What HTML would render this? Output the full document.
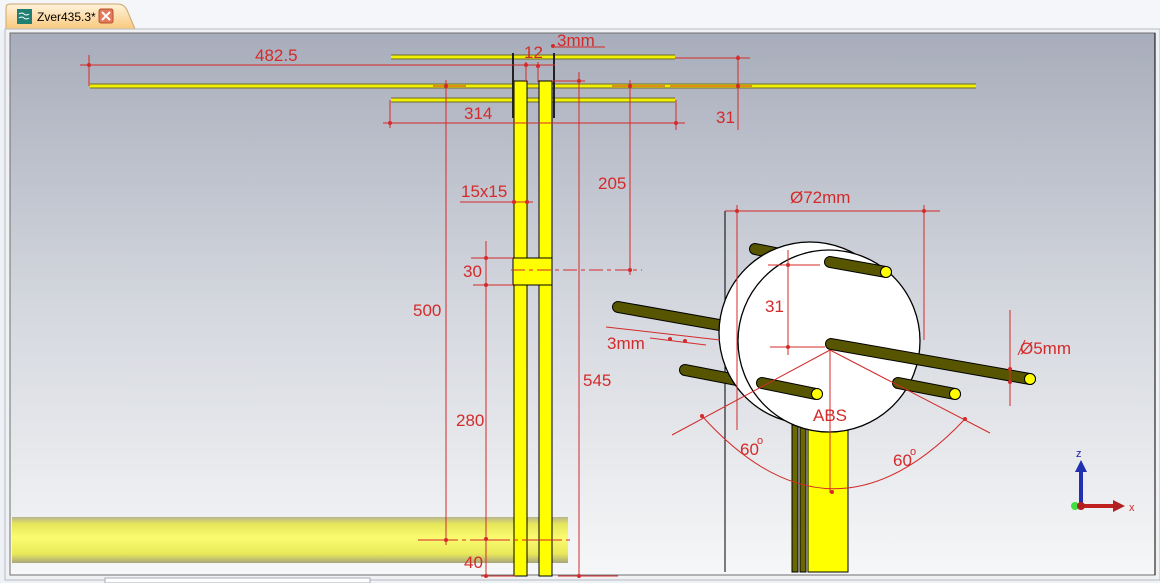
<!DOCTYPE html>
<html><head><meta charset="utf-8"><style>
html,body{margin:0;padding:0;width:1160px;height:583px;overflow:hidden;background:#eef1f5}
svg{display:block}
text{font-family:"Liberation Sans",sans-serif;fill:#d42a2a}
</style></head><body>
<svg width="1160" height="583" viewBox="0 0 1160 583" xmlns="http://www.w3.org/2000/svg">
<defs>
<linearGradient id="bg" x1="0" y1="0" x2="0" y2="1">
<stop offset="0" stop-color="#a8adbb"/><stop offset="0.5" stop-color="#d4d7de"/><stop offset="1" stop-color="#f6f7f8"/>
</linearGradient>
<linearGradient id="bar" x1="0" y1="0" x2="0" y2="1">
<stop offset="0" stop-color="#b8b690"/><stop offset="0.15" stop-color="#e6e65a"/><stop offset="0.45" stop-color="#fbfb70"/><stop offset="0.8" stop-color="#e9e95a"/><stop offset="1" stop-color="#a8a67c"/>
</linearGradient>
<linearGradient id="tab" x1="0" y1="0" x2="0" y2="1">
<stop offset="0" stop-color="#fff3dc"/><stop offset="1" stop-color="#f9c77a"/>
</linearGradient>
</defs>
<rect width="1160" height="583" fill="#eef1f5"/>
<rect x="0" y="0" width="1160" height="30" fill="#f4f6f9"/>
<path d="M6 30 L6 8 Q6 4 10 4 L118 4 Q124 4 127 10 L135 29 Z" fill="url(#tab)" stroke="#c9a56a"/>
<rect x="17" y="9" width="15" height="15" fill="#1f7f72"/>
<path d="M19 14 q3 -2 5 0 t5 0 M19 18 q3 -2 5 0 t5 0" stroke="#fff" fill="none"/>
<text x="37" y="21" font-size="12" style="fill:#000">Zver435.3*</text>
<rect x="99" y="9" width="14" height="14" rx="2" fill="#e07a5a" stroke="#b85030"/>
<path d="M102 12 L110 20 M110 12 L102 20" stroke="#fff" stroke-width="2"/>
<rect x="5" y="29" width="1155" height="551" fill="#f0f1f3" stroke="#b8bcc4"/>
<rect x="10" y="33" width="1145" height="542" fill="url(#bg)" stroke="#707070"/>
<line x1="1155" y1="33" x2="1155" y2="575" stroke="#000"/>

<rect x="12" y="517" width="556" height="46" fill="url(#bar)"/>

<g stroke-linecap="butt">
<line x1="391" y1="57" x2="675" y2="57" stroke="#6a6a30" stroke-width="5"/><line x1="391" y1="57" x2="675" y2="57" stroke="#f0f000" stroke-width="3"/>
<line x1="90" y1="86" x2="976" y2="86" stroke="#6a6a30" stroke-width="5"/><line x1="90" y1="86" x2="976" y2="86" stroke="#f0f000" stroke-width="3"/>
<line x1="391" y1="100" x2="675" y2="100" stroke="#6a6a30" stroke-width="5"/><line x1="391" y1="100" x2="675" y2="100" stroke="#f0f000" stroke-width="3"/>
</g>
<rect x="514" y="81" width="13" height="495" fill="#ffff00" stroke="#000"/>
<rect x="539" y="81" width="13" height="495" fill="#ffff00" stroke="#000"/>
<rect x="513" y="258" width="39" height="27" fill="#ffff00" stroke="#000"/>
<line x1="513" y1="53" x2="513" y2="118" stroke="#222" stroke-width="2"/>
<line x1="554" y1="53" x2="554" y2="118" stroke="#222" stroke-width="2"/>

<g stroke="#d42a2a" stroke-width="1" fill="none">
<line x1="80" y1="65" x2="555" y2="65"/><line x1="89" y1="55" x2="89" y2="86"/>
<line x1="383" y1="123" x2="685" y2="123"/><line x1="390" y1="100" x2="390" y2="128"/><line x1="676" y1="100" x2="676" y2="130"/>
<line x1="675" y1="58" x2="750" y2="58"/><line x1="738" y1="55" x2="738" y2="130"/><line x1="670" y1="86" x2="752" y2="86"/>
<line x1="526" y1="62" x2="526" y2="82"/><line x1="538" y1="62" x2="538" y2="82"/><line x1="555" y1="47" x2="605" y2="47"/>
<line x1="446" y1="80" x2="446" y2="545"/><line x1="433" y1="86" x2="466" y2="86"/>
<line x1="579" y1="72" x2="579" y2="578"/><line x1="552" y1="81" x2="585" y2="81"/><line x1="558" y1="576" x2="618" y2="576"/>
<line x1="630" y1="80" x2="630" y2="275"/><line x1="612" y1="86" x2="665" y2="86"/><line x1="511" y1="270" x2="642" y2="270" stroke-dasharray="14 4 4 4"/>
<line x1="460" y1="202" x2="533" y2="202"/>
<line x1="486" y1="241" x2="486" y2="578"/><line x1="471" y1="258" x2="513" y2="258"/><line x1="473" y1="285" x2="513" y2="285"/><line x1="481" y1="576" x2="515" y2="576"/>
<line x1="418" y1="540" x2="572" y2="540" stroke-dasharray="40 4 4 4"/>
</g>
<g fill="#d42a2a">
<circle cx="89" cy="65" r="2"/><circle cx="390" cy="123" r="2"/><circle cx="676" cy="123" r="2"/><circle cx="738" cy="58" r="2"/><circle cx="738" cy="86" r="2"/>
<circle cx="526" cy="65" r="2"/><circle cx="538" cy="66" r="2"/><circle cx="553" cy="46" r="2"/><circle cx="446" cy="86" r="2"/><circle cx="579" cy="81" r="2"/><circle cx="630" cy="86" r="2"/><circle cx="630" cy="270" r="2"/>
<circle cx="514" cy="202" r="2"/><circle cx="527" cy="202" r="2"/><circle cx="486" cy="258" r="2"/><circle cx="486" cy="285" r="2"/><circle cx="446" cy="540" r="2"/><circle cx="486" cy="539" r="2"/><circle cx="486" cy="576" r="2"/><circle cx="579" cy="576" r="2"/>
</g>
<g font-size="17">
<text x="255" y="61">482.5</text><text x="524" y="58">12</text><text x="557" y="46">3mm</text>
<text x="464" y="119">314</text><text x="716" y="123">31</text>
<text x="461" y="197">15x15</text><text x="598" y="189">205</text><text x="463" y="277">30</text>
<text x="413" y="316">500</text><text x="583" y="386">545</text><text x="456" y="426">280</text><text x="464" y="568">40</text>
</g>

<line x1="725" y1="211" x2="725" y2="572" stroke="#000"/>
<rect x="792" y="425" width="6" height="147" fill="#6a6800" stroke="#000"/>
<rect x="800" y="425" width="6" height="147" fill="#6a6800" stroke="#000"/>
<rect x="808" y="420" width="40" height="152" fill="#ffff00" stroke="#000"/>
<g stroke-linecap="round">
<line x1="618" y1="307" x2="725" y2="326" stroke="#000" stroke-width="12"/><line x1="618" y1="307" x2="725" y2="326" stroke="#575500" stroke-width="10"/>
<line x1="685" y1="370" x2="742" y2="381" stroke="#000" stroke-width="12"/><line x1="685" y1="370" x2="742" y2="381" stroke="#575500" stroke-width="10"/>
<line x1="755" y1="249" x2="790" y2="256" stroke="#000" stroke-width="12"/><line x1="755" y1="249" x2="790" y2="256" stroke="#575500" stroke-width="10"/>
</g>
<circle cx="810" cy="333" r="91" fill="#fff" stroke="#000" stroke-width="1.3"/>
<circle cx="829" cy="341" r="91" fill="#fff" stroke="#000" stroke-width="1.3"/>
<g stroke-linecap="round">
<g stroke="#000" stroke-width="12">
<line x1="830" y1="262" x2="886" y2="272"/><line x1="831" y1="344" x2="1030" y2="379"/><line x1="762" y1="383" x2="816" y2="394"/><line x1="898" y1="383" x2="955" y2="394"/>
</g>
<g stroke="#575500" stroke-width="10">
<line x1="830" y1="262" x2="886" y2="272"/><line x1="831" y1="344" x2="1030" y2="379"/><line x1="762" y1="383" x2="816" y2="394"/><line x1="898" y1="383" x2="955" y2="394"/>
</g>
</g>
<g fill="#ffff00" stroke="#000">
<circle cx="886" cy="272" r="5.5"/><circle cx="1030" cy="379" r="5.5"/><circle cx="817" cy="394" r="5.5"/><circle cx="955" cy="394" r="5.5"/>
</g>
<g stroke="#d42a2a" stroke-width="1" fill="none">
<line x1="725" y1="211" x2="940" y2="211"/><line x1="737" y1="205" x2="737" y2="430"/><line x1="924" y1="205" x2="924" y2="340"/>
<line x1="768" y1="265" x2="820" y2="265"/><line x1="788" y1="250" x2="788" y2="355"/><line x1="770" y1="347" x2="825" y2="347"/>
<line x1="606" y1="327" x2="720" y2="340"/><line x1="650" y1="338" x2="706" y2="345"/>
<line x1="1010" y1="310" x2="1010" y2="406"/><line x1="1025" y1="340" x2="1018" y2="355"/>
<line x1="830" y1="350" x2="830" y2="493"/>
<line x1="830" y1="350" x2="672" y2="435"/><line x1="830" y1="350" x2="990" y2="433"/>
<path d="M702 416 Q832 560 965 419"/>
</g>
<g fill="#d42a2a">
<circle cx="737" cy="211" r="2"/><circle cx="924" cy="211" r="2"/><circle cx="788" cy="265" r="2"/><circle cx="788" cy="347" r="2"/><circle cx="670" cy="339" r="2"/><circle cx="685" cy="341" r="2"/>
<circle cx="1010" cy="369" r="2"/><circle cx="1010" cy="382" r="2"/><circle cx="702" cy="416" r="2"/><circle cx="965" cy="419" r="2"/><circle cx="832" cy="492" r="2"/>
</g>
<g font-size="17">
<text x="790" y="203">Ø72mm</text><text x="765" y="312">31</text><text x="607" y="349">3mm</text><text x="1020" y="354">Ø5mm</text>
<text x="813" y="421">ABS</text>
<text x="740" y="455">60</text><text x="757" y="444" font-size="11">o</text>
<text x="893" y="466">60</text><text x="910" y="455" font-size="11">o</text>
</g>

<line x1="1081" y1="505" x2="1081" y2="470" stroke="#2030b0" stroke-width="4"/>
<path d="M1075 472 L1081 460 L1087 472 Z" fill="#2030b0"/>
<text x="1076" y="457" font-size="11" style="fill:#1a1aa0">z</text>
<line x1="1081" y1="506" x2="1115" y2="506" stroke="#c02020" stroke-width="4"/>
<path d="M1113 500 L1125 506 L1113 512 Z" fill="#b02020"/>
<circle cx="1075" cy="506" r="4" fill="#40e040"/>
<circle cx="1081" cy="506" r="4" fill="#b02020"/>
<text x="1129" y="511" font-size="11">x</text>

<rect x="105" y="578" width="265" height="5" fill="#fff" stroke="#aab"/>
</svg>
</body></html>
